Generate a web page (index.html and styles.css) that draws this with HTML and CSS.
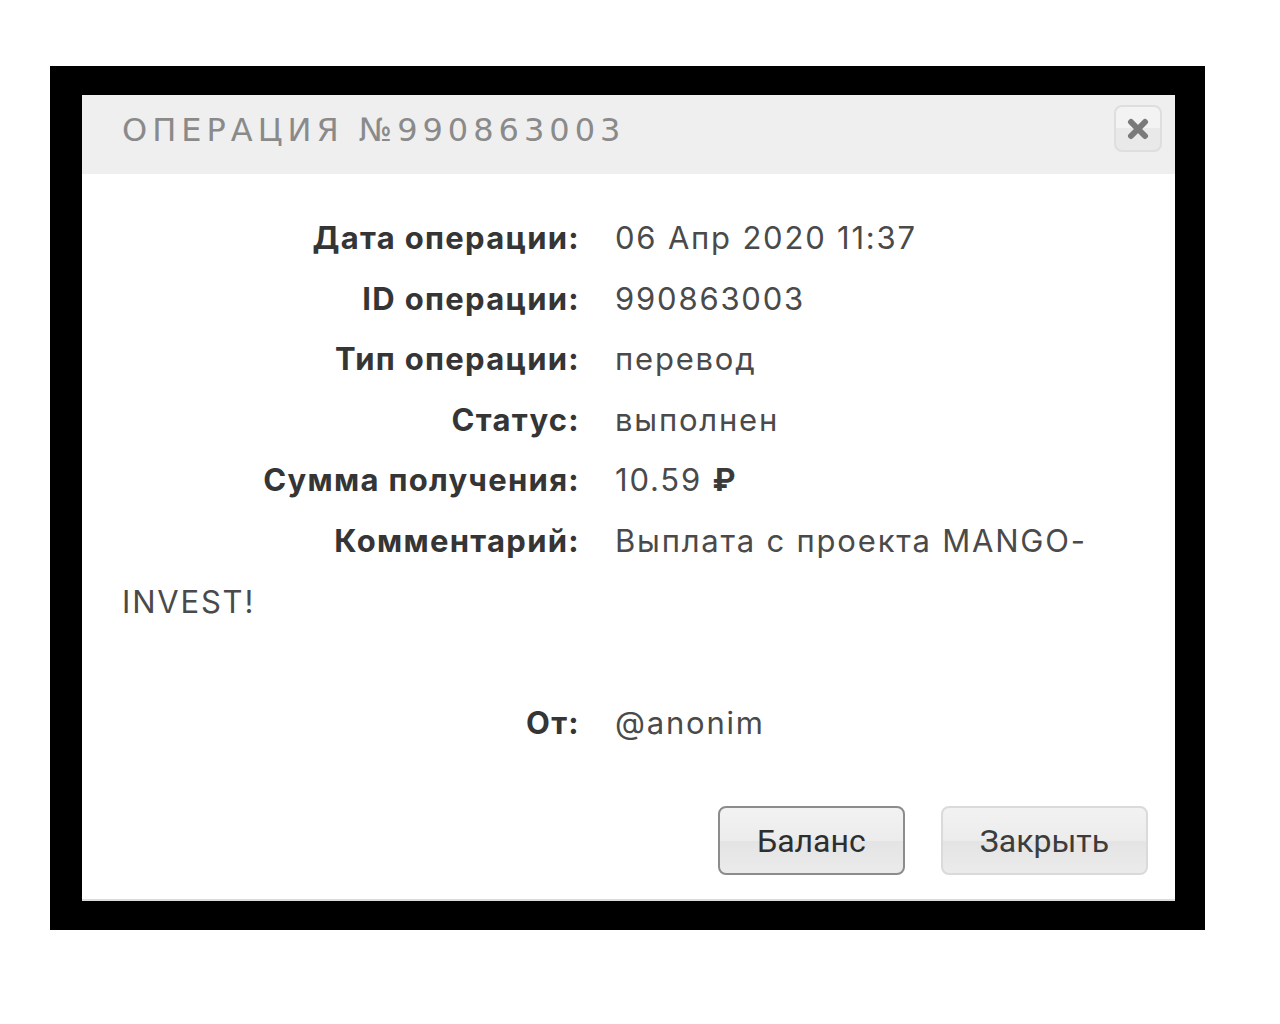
FILE: index.html
```html
<!DOCTYPE html>
<html lang="ru">
<head>
    <meta charset="UTF-8">
    <meta name="viewport" content="width=device-width, initial-scale=1.0">
    <title>Операция №990863003</title>
    <link rel="stylesheet" href="styles.css">
</head>
<body>
    <div class="frame">
        <div class="dialog">
            <div class="dialog-header">
                <span class="dialog-title">Операция №990863003</span>
                <button class="close-btn" type="button" aria-label="Закрыть">
                    <svg width="22" height="22" viewBox="0 0 22 22">
                        <path d="M4 4 L18 18 M18 4 L4 18" stroke="#7a7a7a" stroke-width="6" stroke-linecap="round"/>
                    </svg>
                </button>
            </div>

            <div class="dialog-body">
                <div class="row"><span class="label">Дата операции:</span><span class="value">06 Апр 2020 11:37</span></div>
                <div class="row"><span class="label">ID операции:</span><span class="value">990863003</span></div>
                <div class="row"><span class="label">Тип операции:</span><span class="value">перевод</span></div>
                <div class="row"><span class="label">Статус:</span><span class="value">выполнен</span></div>
                <div class="row"><span class="label">Сумма получения:</span><span class="value">10.59 <b class="rub">₽</b></span></div>
                <div class="row"><span class="label">Комментарий:</span><span class="value">Выплата с проекта MANGO-INVEST!</span></div>
                <div class="row empty"></div>
                <div class="row"><span class="label">От:</span><span class="value">@anonim</span></div>
            </div>

            <div class="dialog-footer">
                <button class="btn btn-active" type="button">Баланс</button>
                <button class="btn" type="button">Закрыть</button>
            </div>
        </div>
    </div>
</body>
</html>
```

FILE: styles.css
```css
body {
    margin: 0;
    background: #fff;
    font-family: Inter, "Open Sans", sans-serif;
}
.frame {
    width: 1155px;
    height: 864px;
    margin: 66px 0 0 50px;
    padding: 29px 30px 29px 32px;
    box-sizing: border-box;
    background: #000;
}
.dialog {
    width: 1093px;
    height: 806px;
    background: #fff;
    border-bottom: 2px solid #dcdcdc;
    box-sizing: border-box;
    display: flex;
    flex-direction: column;
}
.dialog-header {
    height: 79px;
    background: #efefef;
    display: flex;
    align-items: flex-start;
    justify-content: space-between;
    padding: 0 13px 0 40px;
}
.dialog-title {
    color: #8a8a8a;
    font-size: 32px;
    line-height: 70px;
    letter-spacing: 5px;
    text-transform: uppercase;
    font-family: "DejaVu Sans", sans-serif;
    font-weight: normal;
}
.close-btn {
    width: 48px;
    height: 47px;
    margin-top: 10px;
    border: 2px solid #dedede;
    border-radius: 8px;
    background: linear-gradient(#f3f3f3 50%, #e9e9e9 50%);
    display: flex;
    align-items: center;
    justify-content: center;
    padding: 0;
}
.dialog-body {
    padding: 34px 50px 0 40px;
    font-size: 31px;
    line-height: 60.6px;
}
.row.empty {
    height: 60.6px;
}
.label {
    display: inline-block;
    width: 458px;
    text-align: right;
    font-weight: bold;
    color: #353535;
    margin-right: 35px;
    letter-spacing: 1.3px;
}
.value {
    color: #4a4a4a;
    letter-spacing: 1.8px;
}
.rub {
    font-weight: bold;
    color: #3a3a3a;
}
.dialog-footer {
    display: flex;
    justify-content: flex-end;
    gap: 36px;
    padding: 53px 27px 0 0;
}
.btn {
    height: 69px;
    padding: 0 37px;
    font-family: Roboto, sans-serif;
    font-size: 32px;
    color: #3c3c3c;
    border: 2px solid #dadada;
    border-radius: 8px;
    background: linear-gradient(#f2f2f2 0%, #ececec 50%, #e4e4e4 51%, #ebebeb 100%);
}
.btn-active {
    border-color: #8c8c8c;
    color: #2e2e2e;
}
```
